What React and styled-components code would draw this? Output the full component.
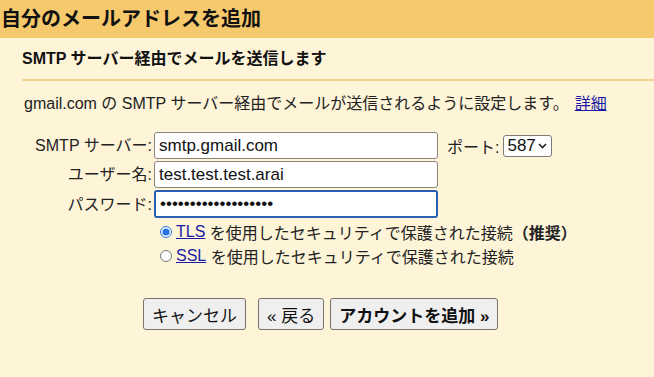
import styled, { createGlobalStyle } from 'styled-components';

const GlobalStyle = createGlobalStyle`
  body {
    margin: 0;
    background: #fef4d8;
    font-family: "Liberation Sans", "Noto Sans CJK JP", sans-serif;
    color: #222;
  }
`;

const Header = styled.div`
  height: 38px;
  background: #f6c96c;
  padding-left: 1px;
  font-size: 20px;
  font-weight: bold;
  line-height: 38px;
  color: #111;
  white-space: nowrap;
`;

const Body = styled.div`
  padding-left: 22px;
`;

const SubTitle = styled.div`
  height: 41px;
  line-height: 41px;
  font-size: 16px;
  font-weight: bold;
  color: #111;
  border-bottom: 2px solid #f1d38e;
`;

const Description = styled.p`
  margin: 13px 0 0 2px;
  font-size: 16px;
  line-height: 20px;
  color: #222;
  white-space: nowrap;
`;

const Link = styled.a`
  color: #1a1aa6;
  text-decoration: underline;
  cursor: pointer;
  margin-left: ${(p) => p.$space || 0}px;
`;

const Form = styled.div`
  display: grid;
  grid-template-columns: 152px 284px auto;
  column-gap: 2px;
  row-gap: 2px;
  margin-top: 18px;
  margin-left: -22px;
  align-items: center;
`;

const Label = styled.label`
  text-align: right;
  font-size: 16px;
  line-height: 27px;
  color: #222;
  white-space: nowrap;
`;

const Input = styled.input`
  box-sizing: border-box;
  width: 284px;
  height: ${(p) => (p.$focused ? '28px' : '27px')};
  margin: 0;
  padding: 0 0 0 4px;
  border: ${(p) => (p.$focused ? '2px solid #2b5fb3' : '1px solid #8a8478')};
  border-radius: 3px;
  background: #fff;
  font-family: "Liberation Sans", "Noto Sans CJK JP", sans-serif;
  font-size: 17px;
  color: #111;
  outline: none;
`;

const Port = styled.div`
  display: flex;
  align-items: center;
  gap: 4px;
  margin-left: 7px;
  font-size: 16px;
  color: #222;
`;

const Select = styled.div`
  box-sizing: border-box;
  display: flex;
  align-items: center;
  gap: 2px;
  height: 22px;
  padding: 0 4px 0 3px;
  border: 1px solid #807b72;
  border-radius: 3px;
  background: #fff;
  font-size: 17px;
  color: #111;
`;

const Options = styled.div`
  margin-left: 136px;
  margin-top: 2px;
`;

const OptionRow = styled.label`
  display: flex;
  align-items: center;
  height: 24px;
  font-size: 16px;
  color: #222;
  white-space: nowrap;
`;

const Radio = styled.input`
  width: 12px;
  height: 12px;
  margin: 0 4px 0 2px;
  accent-color: #2a72e8;
`;

const Buttons = styled.div`
  display: flex;
  margin: 30px 0 0 143px;
`;

const Button = styled.button`
  box-sizing: border-box;
  height: 32px;
  margin-right: ${(p) => p.$gap || 0}px;
  padding: 0 ${(p) => p.$pad || 8}px;
  border: 1px solid #77746e;
  border-radius: 3px;
  background: #efefef;
  font-family: "Liberation Sans", "Noto Sans CJK JP", sans-serif;
  font-size: 17px;
  font-weight: ${(p) => (p.$primary ? 'bold' : 'normal')};
  color: #111;
  cursor: pointer;
`;

const Chevron = () => (
  <svg width="9" height="6" viewBox="0 0 9 6">
    <path d="M1 1 L4.5 4.5 L8 1" fill="none" stroke="#222" strokeWidth="1.6" />
  </svg>
);

export default function App() {
  return (
    <>
      <GlobalStyle />
      <Header>自分のメールアドレスを追加</Header>
      <Body>
        <SubTitle>SMTP サーバー経由でメールを送信します</SubTitle>
        <Description>
          gmail.com の SMTP サーバー経由でメールが送信されるように設定します。<Link $space={6}>詳細</Link>
        </Description>
        <Form>
          <Label>SMTP サーバー:</Label>
          <Input defaultValue="smtp.gmail.com" />
          <Port>
            ポート:
            <Select>
              587
              <Chevron />
            </Select>
          </Port>
          <Label>ユーザー名:</Label>
          <Input defaultValue="test.test.test.arai" />
          <span />
          <Label>パスワード:</Label>
          <Input type="password" defaultValue="abcdefghijklmnopqrs" $focused />
          <span />
        </Form>
        <Options>
          <OptionRow>
            <Radio type="radio" name="sec" defaultChecked />
            <Link>TLS</Link>&nbsp;を使用したセキュリティで保護された接続<b>（推奨）</b>
          </OptionRow>
          <OptionRow>
            <Radio type="radio" name="sec" />
            <Link>SSL</Link>&nbsp;を使用したセキュリティで保護された接続
          </OptionRow>
        </Options>
      </Body>
      <Buttons>
        <Button $gap={12} $pad={8}>キャンセル</Button>
        <Button $gap={6} $pad={8}>« 戻る</Button>
        <Button $primary $pad={8}>アカウントを追加 »</Button>
      </Buttons>
    </>
  );
}
